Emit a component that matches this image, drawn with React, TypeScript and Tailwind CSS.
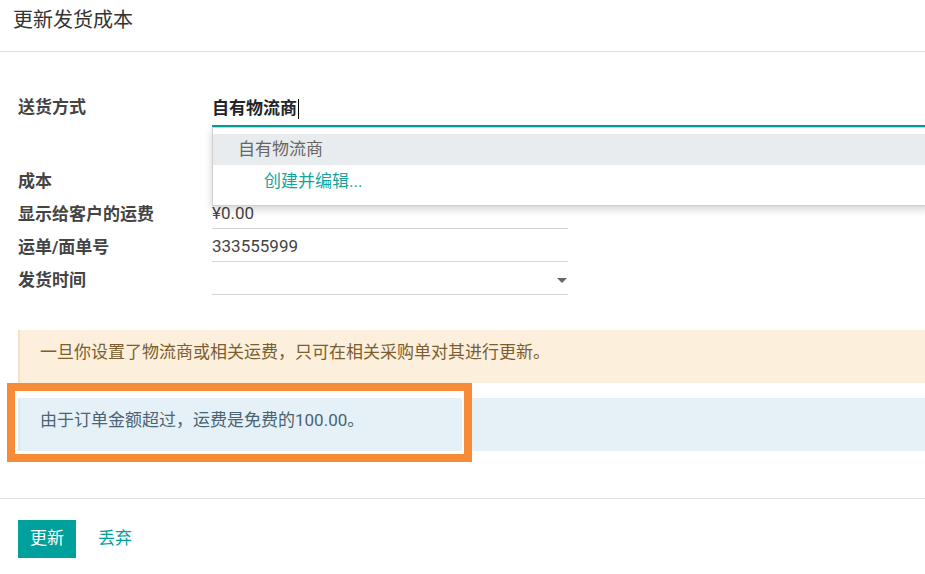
export default function App() {
  return (
    <div className="relative w-[925px] h-[574px] overflow-hidden bg-white text-[17px] text-[#444] font-[family-name:Roboto,'Noto_Sans_CJK_SC',sans-serif]">
      {/* header */}
      <div className="h-[52px] border-b border-[#dee2e6] px-[13px] pt-[6px]">
        <h4 className="text-[20px] leading-[28px] text-[#333]">更新发货成本</h4>
      </div>

      {/* body */}
      <div className="relative px-[18px] pt-[40px]">
        <div className="flex h-[35px]">
          <div className="w-[194px] flex items-center pb-[3px] font-bold">送货方式</div>
          <div className="flex-1 -mr-[18px] flex items-center border-b-2 border-[#00a09d] font-bold text-[#212529]">
            自有物流商
            <span className="inline-block w-px h-[20px] bg-black ml-px" />
          </div>
        </div>

        <div className="mt-[36px]">
          <div className="flex h-[33px]">
            <div className="w-[194px] flex items-center pt-[4px] font-bold">成本</div>
            <div className="w-[356px] flex items-center pt-[4px] border-b border-[#d6d6d6]">¥0.00</div>
          </div>
          <div className="flex h-[33px]">
            <div className="w-[194px] flex items-center pt-[4px] font-bold">显示给客户的运费</div>
            <div className="w-[356px] flex items-center pt-[4px] border-b border-[#d6d6d6]">¥0.00</div>
          </div>
          <div className="flex h-[33px]">
            <div className="w-[194px] flex items-center pt-[4px] font-bold">运单/面单号</div>
            <div className="w-[356px] flex items-center pt-[4px] border-b border-[#d6d6d6]">333555999</div>
          </div>
          <div className="flex h-[33px]">
            <div className="w-[194px] flex items-center pt-[4px] font-bold">发货时间</div>
            <div className="w-[356px] flex items-center justify-end pt-[4px] pr-[1px] border-b border-[#d6d6d6]">
              <span className="w-0 h-0 border-l-[5px] border-r-[5px] border-t-[5px] border-l-transparent border-r-transparent border-t-[#666]" />
            </div>
          </div>
        </div>

        {/* autocomplete dropdown */}
        <div className="absolute left-[212px] right-[-4px] top-[75px] bg-white border border-[#d0d0d0] shadow-[0_3px_8px_rgba(0,0,0,0.18)] py-[6px]">
          <div className="h-[31px] bg-[#e9ecef] pl-[25px] flex items-center text-[#666]">自有物流商</div>
          <div className="h-[34px] pl-[51px] flex items-center text-[#1aa39c]">创建并编辑...</div>
        </div>

        <div className="mt-[35px] -mr-[18px] h-[53px] bg-[#fcefdc] border-l-2 border-[#f6e2c2] pl-[20px] pb-[8px] flex items-center text-[#7b5e30]">
          一旦你设置了物流商或相关运费，只可在相关采购单对其进行更新。
        </div>
        <div className="mt-[15px] -mr-[18px] h-[53px] bg-[#e5f1f7] border-l-2 border-[#d9e9f1] pl-[20px] pb-[8px] flex items-center text-[#4a6473]">
          由于订单金额超过，运费是免费的100.00。
        </div>
      </div>

      {/* footer */}
      <div className="mt-[47px] border-t border-[#dee2e6] px-[18px] pt-[21px] flex items-center gap-[22px]">
        <button className="h-[38px] px-[12px] bg-[#00a09d] text-white">更新</button>
        <button className="text-[#00a09d]">丢弃</button>
      </div>

      {/* annotation box */}
      <div className="absolute left-[7px] top-[383px] w-[465px] h-[79px] border-[8px] border-[#f78b38] shadow-[inset_0_0_0_2px_white]" />
    </div>
  );
}
